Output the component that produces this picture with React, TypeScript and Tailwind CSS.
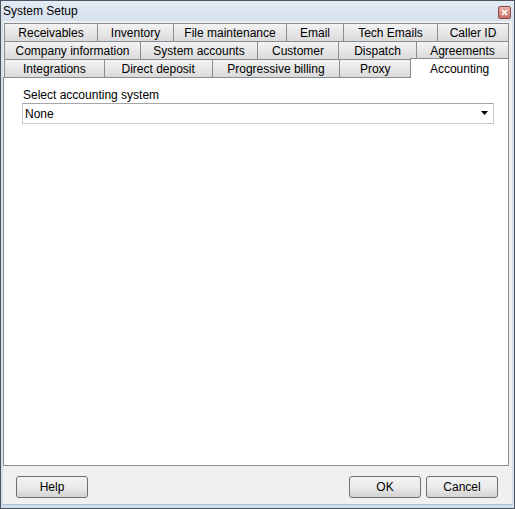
const rows: { label: string; w: number }[][] = [
  [
    { label: "Receivables", w: 93 },
    { label: "Inventory", w: 76 },
    { label: "File maintenance", w: 113 },
    { label: "Email", w: 57 },
    { label: "Tech Emails", w: 94 },
    { label: "Caller ID", w: 72 },
  ],
  [
    { label: "Company information", w: 136 },
    { label: "System accounts", w: 117 },
    { label: "Customer", w: 81 },
    { label: "Dispatch", w: 78 },
    { label: "Agreements", w: 93 },
  ],
  [
    { label: "Integrations", w: 100 },
    { label: "Direct deposit", w: 108 },
    { label: "Progressive billing", w: 128 },
    { label: "Proxy", w: 71 },
  ],
];

const Tab = ({ label, w, last }: { label: string; w: number; last: boolean }) => (
  <div
    className={`h-[18px] flex items-center justify-center border-t border-l border-[#898c95] bg-gradient-to-b from-[#f3f3f3] to-[#dadada] ${last ? "border-r" : ""}`}
    style={{ width: w }}
  >
    {label}
  </div>
);

const Button = ({ label }: { label: string }) => (
  <button className="w-[72px] h-[22px] rounded-[3px] border border-[#707070] bg-gradient-to-b from-[#f2f2f2] via-[#ebebeb] to-[#d3d3d3] text-[12px] text-black">
    {label}
  </button>
);

export default function App() {
  return (
    <div
      className="w-[515px] h-[509px] flex flex-col bg-[#d4dfec] border border-[#4c5460] text-[12px] text-black"
      style={{ fontFamily: '"Liberation Sans", Arial, sans-serif' }}
    >
      {/* title bar */}
      <div className="h-[20px] flex items-center justify-between pl-[2px] pr-[3px] bg-gradient-to-b from-[#e3ebf4] to-[#d5e0ec]">
        <span className="text-[12px] leading-none">System Setup</span>
        <div className="w-[13px] h-[13px] mt-[2px] rounded-[2px] border border-[#8a4a48] bg-gradient-to-b from-[#e9b3ad] to-[#c9706a] flex items-center justify-center">
          <svg width="7" height="7" viewBox="0 0 7 7">
            <path d="M1 1L6 6M6 1L1 6" stroke="#fff" strokeWidth="1.6" />
          </svg>
        </div>
      </div>

      {/* client area */}
      <div className="flex-1 mx-[2px] mb-[3px] bg-[#f0f0f0] flex flex-col border-b border-[#a9c1dc]">
        <div className="pt-[2px] pl-[1px] pr-[3px] flex flex-col">
          {rows.map((row, i) => (
            <div key={i} className="flex">
              {row.map((t, j) => (
                <Tab key={t.label} label={t.label} w={t.w} last={j === row.length - 1 && i < 2} />
              ))}
              {i === 2 && (
                <div className="relative z-10 -mt-[1px] -mb-[1px] h-[20px] w-[99px] bg-white border-t border-l border-r border-[#898c95] flex justify-center pt-[1px]">
                  Accounting
                </div>
              )}
            </div>
          ))}
          <div className="h-[389px] -ml-[1px] bg-white border border-[#898c95] pt-[10px] pl-[18px] pr-[14px]">
            <div className="leading-[14px] mb-[1px] ml-[1px]">Select accounting system</div>
            <div className="h-[21px] border border-[#c9c9c9] border-t-[#a5a5a5] flex items-center justify-between pl-[2px] pr-[4px]">
              <span>None</span>
              <svg width="8" height="5" viewBox="0 0 8 5">
                <path d="M0 0H7L3.5 4Z" fill="#000" />
              </svg>
            </div>
          </div>
        </div>
        <div className="flex items-center justify-between pl-[13px] pr-[14px] mt-[10px]">
          <Button label="Help" />
          <div className="flex gap-[5px]">
            <Button label="OK" />
            <Button label="Cancel" />
          </div>
        </div>
      </div>
    </div>
  );
}
